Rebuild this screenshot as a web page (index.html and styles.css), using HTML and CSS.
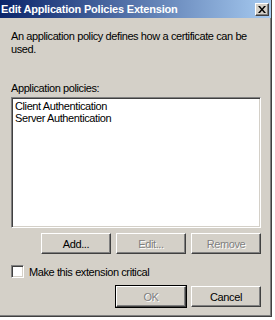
FILE: index.html
```html
<!DOCTYPE html>
<html>
<head>
  <link rel="stylesheet" href="styles.css">
</head>
<body>
  <div class="window">
    <div class="titlebar">
      <span class="title">Edit Application Policies Extension</span>
      <div class="close-btn">
        <svg width="8" height="7" viewBox="0 0 8 7">
          <path d="M0 0h2l2 2.5L6 0h2L5 3.5 8 7H6L4 4.5 2 7H0l3-3.5z" fill="#000"/>
        </svg>
      </div>
    </div>

    <div class="content">
      <div class="description">An application policy defines how a certificate can be used.</div>

      <div class="label">Application policies:</div>
      <div class="listbox">
        <div class="list-item">Client Authentication</div>
        <div class="list-item">Server Authentication</div>
      </div>

      <div class="button-row">
        <div class="btn">Add...</div>
        <div class="btn disabled">Edit...</div>
        <div class="btn disabled">Remove</div>
      </div>

      <label class="check-row">
        <span class="checkbox"></span>
        Make this extension critical
      </label>

      <div class="button-row bottom">
        <div class="btn default disabled">OK</div>
        <div class="btn">Cancel</div>
      </div>
    </div>
  </div>
</body>
</html>
```

FILE: styles.css
```css
body {
  margin: 0;
  padding: 0;
  background: #ffffff;
  font-family: "Liberation Sans", Arial, sans-serif;
  font-size: 11px;
  letter-spacing: -0.4px;
  color: #000000;
}
.window {
  width: 271px;
  height: 316px;
  background: #d4d0c8;
  border-right: 1px solid #404040;
  border-bottom: 1px solid #404040;
  box-shadow: inset -1px -1px #808080;
  display: flex;
  flex-direction: column;
}
.titlebar {
  height: 18px;
  background: linear-gradient(to right, #0a246a, #a6caf0);
  display: flex;
  align-items: center;
  justify-content: space-between;
  padding: 0 2px 0 1px;
}
.title {
  color: #ffffff;
  font-weight: bold;
  font-size: 11px;
  letter-spacing: -0.2px;
}
.close-btn {
  width: 12px;
  height: 11px;
  background: #d4d0c8;
  border: 1px solid;
  border-color: #ffffff #404040 #404040 #ffffff;
  box-shadow: inset -1px -1px #808080;
  display: flex;
  align-items: center;
  justify-content: center;
}
.content {
  flex: 1;
  display: flex;
  flex-direction: column;
  padding: 12px 10px 0 11px;
}
.description {
  line-height: 13px;
}
.label {
  line-height: 13px;
  margin-top: 26px;
}
.listbox {
  height: 125px;
  margin-top: 2px;
  background: #ffffff;
  border: 1px solid;
  border-color: #808080 #ffffff #ffffff #808080;
  box-shadow: inset 1px 1px #404040, inset -1px -1px #d4d0c8;
  padding: 2px 3px;
}
.list-item {
  line-height: 12px;
}
.button-row {
  display: flex;
  justify-content: flex-end;
  gap: 5px;
  margin-top: 5px;
}
.btn {
  width: 68px;
  height: 19px;
  border: 1px solid;
  border-color: #ffffff #404040 #404040 #ffffff;
  box-shadow: inset -1px -1px #808080;
  display: flex;
  align-items: center;
  justify-content: center;
}
.btn.disabled {
  color: #808080;
  text-shadow: 1px 1px #ffffff;
}
.btn.default {
  outline: 1px solid #000000;
}
.check-row {
  display: flex;
  align-items: center;
  gap: 5px;
  margin-top: 11px;
}
.checkbox {
  width: 11px;
  height: 11px;
  background: #ffffff;
  border: 1px solid;
  border-color: #808080 #ffffff #ffffff #808080;
  box-shadow: inset 1px 1px #404040, inset -1px -1px #d4d0c8;
}
.button-row.bottom {
  margin-top: 8px;
}
```
